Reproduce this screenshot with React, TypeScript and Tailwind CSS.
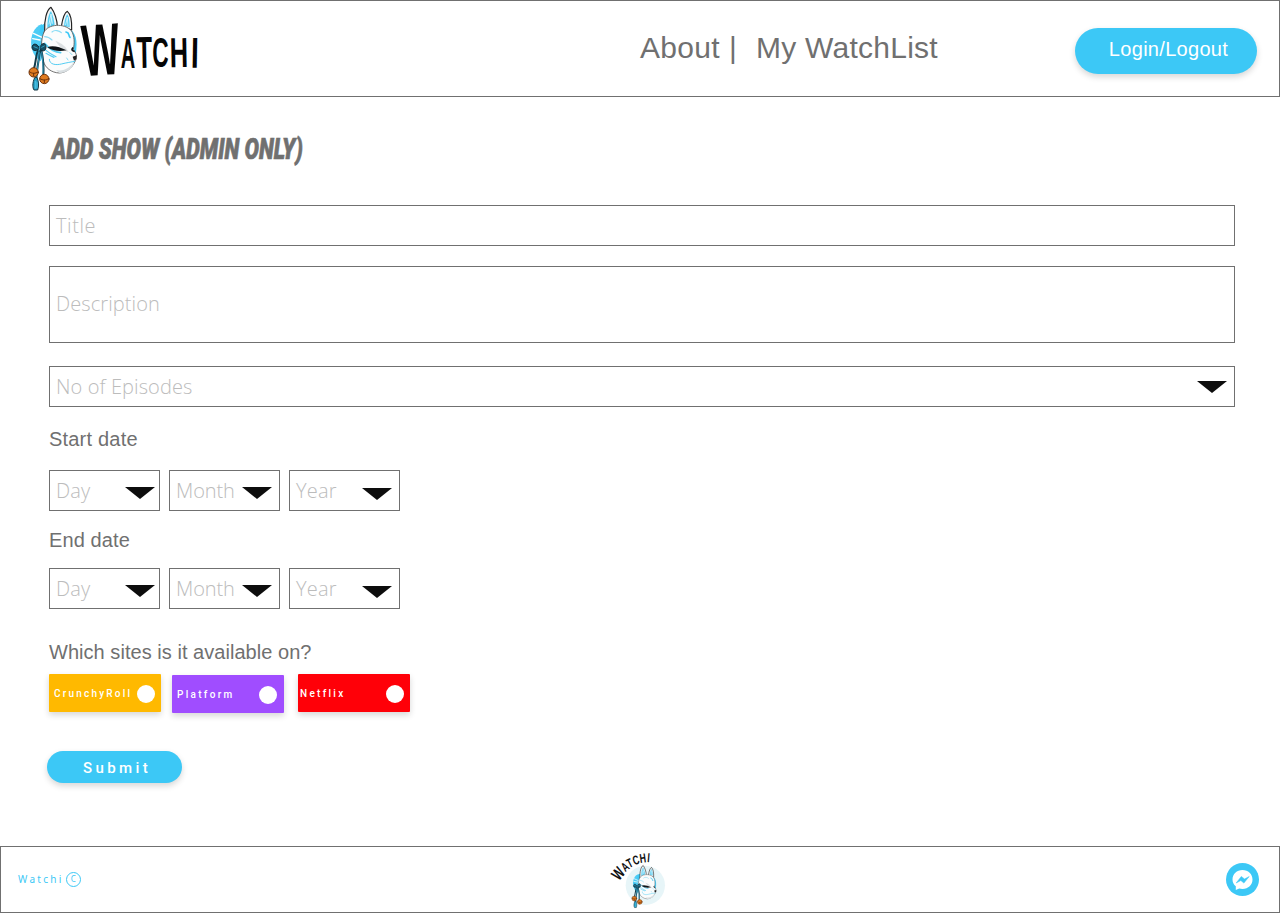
import type { ReactNode } from "react";

const BLUE = "#3cc8f6";

function FoxMask() {
  return (
    <g strokeLinejoin="round" strokeLinecap="round">
      <path d="M66 72C42 80 30 108 34 138C37 160 48 174 62 184L80 130Z" fill="#4dccf5" />
      <path d="M62 78L80 66L74 110L58 98Z" fill="#3cc8f6" />
      <path d="M40 100L66 112M38 116L60 120" stroke="#fff" strokeWidth="4" />
      <path d="M134 82C162 86 173 112 169 146C168 170 160 184 148 196Z" fill="#4dccf5" />
      <path d="M74 94C72 60 80 30 93 22C104 36 112 62 112 80Z" fill="#f4f6f7" stroke="#222" strokeWidth="3.5" />
      <path d="M82 84C82 58 86 42 93 33C99 46 103 64 104 76Z" fill="#54cdf3" />
      <path d="M87 72L93 42L97 70M91 76L95 56" fill="none" stroke="#dff6fd" strokeWidth="2.5" />
      <path d="M124 80C128 54 134 38 142 34C152 42 156 64 155 90Z" fill="#f4f6f7" stroke="#222" strokeWidth="3.5" />
      <path d="M132 78C134 58 138 48 142 43C148 54 149 66 149 82Z" fill="#54cdf3" />
      <path d="M137 74L142 52L144 78" fill="none" stroke="#dff6fd" strokeWidth="2.5" />
      <path d="M72 96C84 72 132 68 154 92C164 108 164 130 160 148C172 164 172 174 164 186C156 204 138 218 118 219C94 218 76 204 70 184C62 156 62 118 72 96Z" fill="#fbfcfc" stroke="#555" strokeWidth="2.5" />
      <path d="M106 122C126 130 138 140 146 156C136 154 122 146 106 122Z" fill="#dde1e3" />
      <path d="M108 210C132 216 152 202 163 184C160 206 140 220 118 219Z" fill="#d9dfe2" />
      <path d="M74 130C86 144 104 157 122 158" fill="none" stroke="#54cdf3" strokeWidth="5" />
      <path d="M82 142C96 135 118 140 140 151C118 156 98 153 82 142Z" fill="#101518" />
      <path d="M74 148C86 158 94 163 108 170M78 160C88 166 94 169 102 172" fill="none" stroke="#54cdf3" strokeWidth="3.5" />
      <path d="M96 96C104 88 118 92 124 98M74 110C84 110 90 114 96 120" fill="none" stroke="#8adcf5" strokeWidth="3.5" />
      <path d="M138 96C150 98 144 106 150 112" fill="none" stroke="#3cc8f6" strokeWidth="5" />
      <path d="M158 144C154 148 156 152 162 154" fill="none" stroke="#101518" strokeWidth="5" />
      <path d="M158 170L170 166L169 178L162 182Z" fill="#222" />
      <path d="M88 178C88 194 108 196 124 192C140 188 154 186 164 184" fill="none" stroke="#54cdf3" strokeWidth="3" />
      <path d="M140 174L144 180M150 158L156 164" stroke="#8adcf5" strokeWidth="3" />
      <path d="M54 150C46 170 48 190 41 208M60 152C56 184 50 208 49 238M64 150C70 178 72 202 70 230" fill="none" stroke="#123c4c" strokeWidth="6" />
      <path d="M58 156C56 184 52 204 50 232M65 156C68 176 70 200 69 220" fill="none" stroke="#35a7cc" strokeWidth="2.5" />
      <path d="M58 142C48 128 38 130 36 142C38 156 50 152 58 146C70 158 78 152 78 140C76 126 66 128 58 142Z" fill="#155066" stroke="#102a35" strokeWidth="3" />
      <path d="M42 140L52 144M65 142L73 138M60 134L57 152" stroke="#3baed3" strokeWidth="2.5" />
      <path d="M44 233C36 250 38 264 42 270L53 270C57 258 57 246 51 233Z" fill="#259ec5" stroke="#143642" strokeWidth="3" />
      <path d="M46 244V265M51 246V264" stroke="#67d5f4" strokeWidth="2" />
      <circle cx="41" cy="217" r="14" fill="#df7b20" stroke="#70350d" strokeWidth="3" />
      <path d="M28 215C36 222 46 221 54 216M41 220V228" fill="none" stroke="#6d310b" strokeWidth="3" />
      <circle cx="73" cy="237" r="14" fill="#df7b20" stroke="#70350d" strokeWidth="3" />
      <path d="M60 236C69 242 78 241 86 236M73 240V248" fill="none" stroke="#6d310b" strokeWidth="3" />
    </g>
  );
}

const wordmark = [
  { c: "W", x: 191, y: 229, sx: 1.2, sy: 2.2, r: -4 },
  { c: "A", x: 302, y: 203, sx: 0.6, sy: 1.3, r: 0 },
  { c: "T", x: 350, y: 204, sx: 0.77, sy: 1.34, r: -1 },
  { c: "C", x: 397, y: 202, sx: 0.68, sy: 1.28, r: 0 },
  { c: "H", x: 450, y: 202, sx: 0.76, sy: 1.26, r: -1 },
  { c: "I", x: 512, y: 203, sx: 0.84, sy: 1.3, r: 1 },
];

function HeaderLogo() {
  return (
    <svg viewBox="0 0 570 288" className="-mt-px h-24 w-[190px] shrink-0" aria-label="Watchi">
      <FoxMask />
      <g fontFamily="Liberation Sans, sans-serif" fontWeight="700" fontSize="100" fill="#050505">
        {wordmark.map((l) => (
          <text key={l.c} transform={`translate(${l.x} ${l.y}) rotate(${l.r}) scale(${l.sx} ${l.sy})`}>
            {l.c}
          </text>
        ))}
      </g>
    </svg>
  );
}

const arc = [
  { c: "W", x: 57, y: 106, r: -50, s: 1.35 },
  { c: "A", x: 76, y: 79, r: -38, s: 1.05 },
  { c: "T", x: 88, y: 67, r: -27, s: 1.05 },
  { c: "C", x: 103, y: 58, r: -18, s: 1.05 },
  { c: "H", x: 121, y: 51, r: -8, s: 1.05 },
  { c: "I", x: 141, y: 48, r: 5, s: 1.05 },
];

function FooterLogo() {
  return (
    <svg viewBox="0 0 240 200" className="ml-[3px] h-[66.67px] w-20 shrink-0" aria-label="Watchi">
      <circle cx="136" cy="118" r="59" fill="#e7f5f8" />
      <g transform="translate(82 47) scale(.51)">
        <FoxMask />
      </g>
      <g fontFamily="Liberation Sans, sans-serif" fontWeight="700" fontSize="32" fill="#111">
        {arc.map((l) => (
          <text key={l.c} transform={`translate(${l.x} ${l.y}) rotate(${l.r}) scale(${0.78 * l.s} ${1.15 * l.s})`}>
            {l.c}
          </text>
        ))}
      </g>
    </svg>
  );
}

function Caret({ className = "" }: { className?: string }) {
  return (
    <svg viewBox="0 0 30 12" className={`h-3 w-[30px] shrink-0 ${className}`}>
      <path d="M0 0H30L15 12Z" fill="#0d0d0d" />
    </svg>
  );
}

function Field({ className, label, children }: { className: string; label: ReactNode; children?: ReactNode }) {
  return (
    <div className={`flex items-center justify-between border border-[#707070] pl-1.5 font-['Open_Sans',sans-serif] text-[20px] font-light whitespace-nowrap text-[#bcbcbc] ${className}`}>
      <span>{label}</span>
      {children}
    </div>
  );
}

function DateRow() {
  return (
    <div className="flex gap-[9px]">
      <Field className="h-[41px] w-[111px] pr-1" label={<span className="tracking-[0.2px]">Day</span>}>
        <Caret className="mt-1" />
      </Field>
      <Field className="h-[41px] w-[111px] pr-[7px]" label={<span className="tracking-[-0.1px]">Month</span>}>
        <Caret className="mt-1" />
      </Field>
      <Field className="h-[41px] w-[111px] pr-[7px]" label={<span className="tracking-[0.2px]">Year</span>}>
        <Caret className="mt-1.5" />
      </Field>
    </div>
  );
}

function Chip({ label, className }: { label: string; className: string }) {
  return (
    <div className={`flex h-[38px] w-28 items-center justify-between rounded-[1px] font-['Roboto',sans-serif] text-[10px] font-medium whitespace-nowrap text-white shadow-[0_3px_6px_rgba(0,0,0,0.16)] ${className}`}>
      <span>{label}</span>
      <span className="mt-0.5 size-[18px] shrink-0 rounded-full bg-white" />
    </div>
  );
}

export default function App() {
  return (
    <div className="flex h-[917px] w-[1280px] flex-col overflow-hidden bg-white font-['Liberation_Sans',sans-serif] text-[#707070]">
      <header className="flex h-[97px] shrink-0 border border-[#707070] pl-[19px]">
        <HeaderLogo />
        <nav className="mt-[29px] ml-[430px] flex text-[30px] leading-9 whitespace-nowrap">
          <span className="w-[89px] tracking-[0.3px]">About</span>
          <span className="w-[27px]">|</span>
          <span className="w-[200px] tracking-[0.25px]">My WatchList</span>
        </nav>
        <button className="mt-[27px] ml-[119px] h-[46px] w-[182px] rounded-full bg-[#3cc8f6] pb-[5px] pl-[5px] text-[20px] tracking-[0.3px] text-white shadow-[0_3px_6px_rgba(0,0,0,0.16)]">
          Login/Logout
        </button>
      </header>

      <main className="flex h-[749px] shrink-0 flex-col items-start pl-[49px]">
        <h1 className="mt-[33px] ml-[3px] h-[38px] origin-left scale-x-[0.72] font-['Roboto',sans-serif] text-[30px] leading-[38px] font-black whitespace-nowrap italic [-webkit-text-stroke:0.7px_#707070]">
          ADD SHOW (ADMIN ONLY)
        </h1>
        <Field className="mt-[37px] h-[41px] w-[1186px]" label={<span className="tracking-[0.6px]">Title</span>} />
        <Field className="mt-5 h-[77px] w-[1186px] pb-px" label={<span className="tracking-[0.1px]">Description</span>} />
        <Field className="mt-[23px] h-[41px] w-[1186px] pr-[7px]" label={<span className="tracking-[0.1px]">No of Episodes</span>}>
          <Caret />
        </Field>
        <h2 className="mt-[20px] mb-[19px] text-[20px] leading-6 tracking-[0.2px]">Start date</h2>
        <DateRow />
        <h2 className="mt-[17px] mb-4 text-[20px] leading-6 tracking-[0.1px]">End date</h2>
        <DateRow />
        <h2 className="mt-[31px] mb-[10px] text-[20px] leading-6 tracking-[0.04px]">Which sites is it available on?</h2>
        <div className="flex h-[39px] items-start">
          <Chip label="CrunchyRoll" className="bg-[#ffb900] pr-1.5 pl-[5px] tracking-[2.2px]" />
          <Chip label="Platform" className="mt-px ml-[11px] bg-[#a04dff] pr-[7px] pl-[5px] tracking-[2.3px]" />
          <Chip label="Netflix" className="ml-3.5 bg-[#ff0008] pr-1.5 pl-0.5 tracking-[2.3px]" />
        </div>
        <button className="mt-[38px] -ml-0.5 h-8 w-[135px] rounded-full bg-[#3cc8f6] pt-[2px] pl-[5px] font-['Roboto',sans-serif] text-[15px] leading-5 font-medium tracking-[3.4px] text-white shadow-[0_3px_6px_rgba(0,0,0,0.16)]">
          Submit
        </button>
      </main>

      <footer className="grid h-[67px] shrink-0 grid-cols-3 items-center border border-[#707070] pr-5 pl-[17px]">
        <div className="flex items-center gap-[2px] font-['Noto_Sans',sans-serif] text-[10px] text-[#3cc8f6]">
          <span className="tracking-[2.3px]">Watchi</span>
          <span className="flex size-[15px] items-center justify-center rounded-full border border-[#3cc8f6] pb-px text-[8px] leading-none">C</span>
        </div>
        <div className="flex h-[63px] items-center justify-center">
          <FooterLogo />
        </div>
        <svg viewBox="0 0 33 33" className="size-[33px] justify-self-end" aria-label="Messenger">
          <circle cx="16.5" cy="16.5" r="16.5" fill={BLUE} />
          <path d="M16.5 7C10.8 7 6.5 11 6.5 16.5C6.5 19.3 7.7 21.6 9.8 23.3V27L13.2 25.4C14.2 25.7 15.3 25.9 16.5 25.9C22.4 25.9 26.5 21.8 26.5 16.5C26.5 11 22.2 7 16.5 7Z" fill="#fff" />
          <path d="M10.2 20L15.3 13.4L18.5 16L23.2 13.5L17.9 20.1L14.8 17.5Z" fill={BLUE} stroke={BLUE} strokeWidth="0.5" />
        </svg>
      </footer>
    </div>
  );
}
